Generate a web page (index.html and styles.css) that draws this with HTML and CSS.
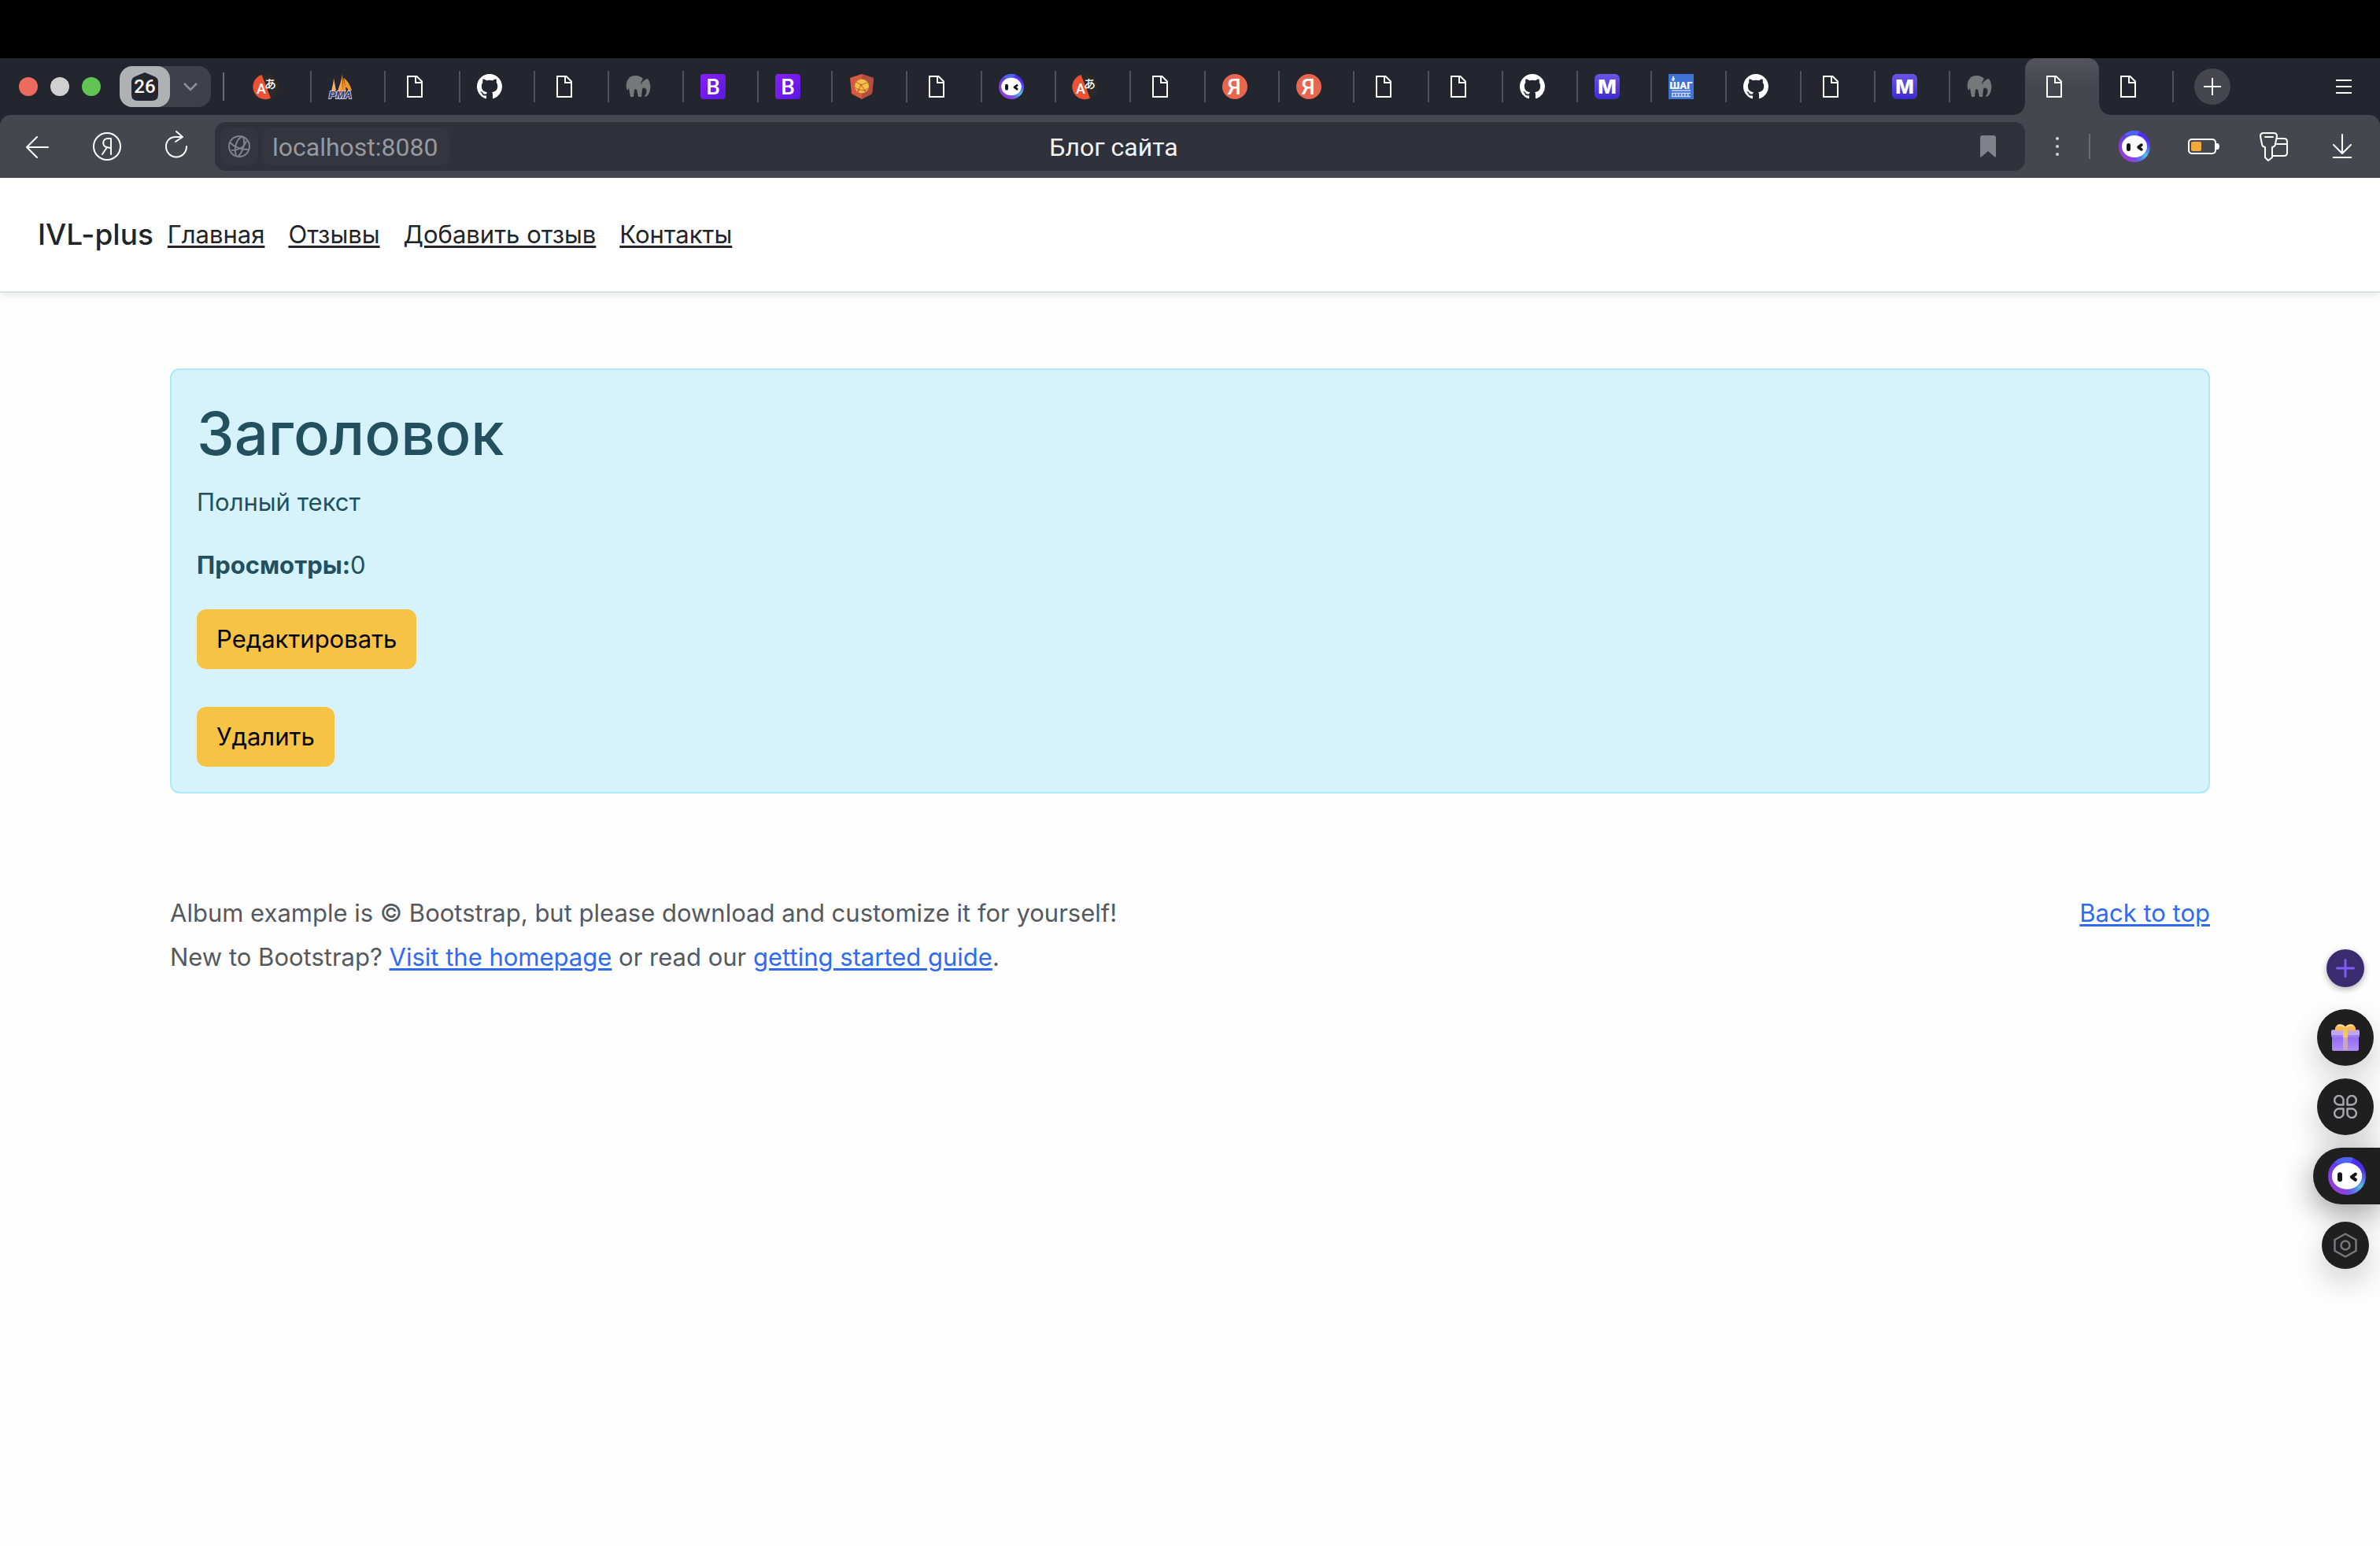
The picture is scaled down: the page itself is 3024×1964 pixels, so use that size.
FILE: index.html
```html
<!DOCTYPE html>
<html lang="ru">
<head>
<meta charset="utf-8">
<meta name="viewport" content="width=device-width, initial-scale=1">
<title>Блог сайта</title>
<link rel="stylesheet" href="styles.css">
</head>
<body>
<svg class="sprite" width="0" height="0" aria-hidden="true">
  <defs>
    <linearGradient id="g-alice" x1="0" y1="1" x2="1" y2="0">
      <stop offset="0" stop-color="#b23fd0"/><stop offset=".45" stop-color="#6a3df0"/><stop offset="1" stop-color="#4326f0"/>
    </linearGradient>
    <radialGradient id="g-cyan" cx=".88" cy=".8" r=".5">
      <stop offset="0" stop-color="#4fd0da"/><stop offset="1" stop-color="#4a6cf0" stop-opacity="0"/>
    </radialGradient>
    <linearGradient id="g-boot" x1="0" y1="0" x2="1" y2="1">
      <stop offset="0" stop-color="#8a1ff5"/><stop offset="1" stop-color="#5a17e0"/>
    </linearGradient>
    <linearGradient id="g-m" x1="0" y1="0" x2="0" y2="1">
      <stop offset="0" stop-color="#6a55e8"/><stop offset="1" stop-color="#3d2bd0"/>
    </linearGradient>
    <linearGradient id="g-sail" x1="0" y1="0" x2="1" y2="0">
      <stop offset="0" stop-color="#f4b976"/><stop offset="1" stop-color="#ef8d22"/>
    </linearGradient>
    <linearGradient id="g-gift" x1="0" y1="0" x2="0" y2="1">
      <stop offset="0" stop-color="#8a63f2"/><stop offset="1" stop-color="#b18cf8"/>
    </linearGradient>
  </defs>
  <symbol id="i-file" viewBox="0 0 32 32">
    <path d="M7 3h11.500l6.500 6.500V29H7zM17 3v8h8" fill="none" stroke="#fff" stroke-width="2"/>
  </symbol>
  <symbol id="i-github" viewBox="0 0 16 16">
    <path fill="#fff" d="M8 0C3.580 0 0 3.580 0 8c0 3.540 2.290 6.530 5.470 7.590.4.07.55-.17.55-.38 0-.19-.01-.82-.01-1.490-2.010.37-2.530-.49-2.690-.94-.09-.23-.48-.94-.82-1.130-.28-.15-.68-.52-.01-.53.63-.01 1.080.58 1.230.82.72 1.210 1.870.87 2.330.66.07-.52.28-.87.51-1.070-1.780-.2-3.640-.89-3.640-3.950 0-.87.31-1.590.82-2.150-.08-.2-.36-1.020.08-2.120 0 0 .67-.21 2.200.82.64-.18 1.320-.27 2-.27s1.360.09 2 .27c1.530-1.040 2.200-.82 2.200-.82.44 1.100.16 1.920.08 2.120.51.56.82 1.270.82 2.150 0 3.070-1.870 3.750-3.650 3.950.29.25.54.73.54 1.480 0 1.070-.01 1.930-.01 2.200 0 .21.15.46.55.38A8.010 8.010 0 0 0 16 8c0-4.420-3.580-8-8-8z"/>
  </symbol>
  <symbol id="i-elephant" viewBox="0 0 32 32">
    <path fill="#77787a" d="M1 12C2 6 6 2 12 2c5 0 8 2 10 4l-3 5 4 6-2 2-1 10h-4l-2-9c-1-1-2-1-3 0l-1 9H6L4 18l-2 3C1 18 0 15 1 12z"/>
    <path fill="#77787a" d="M20 11l5-4 3-1c3 4 4 9 3 14-1 5-3 8-6 9l-1-1c2-2 3-5 2-9-3-1-5-3-6-8z"/>
  </symbol>
  <symbol id="i-shield" viewBox="0 0 32 32">
    <path d="M16 0L31 5l-2 20-13 7-13-7L1 5z" fill="#d75a43"/>
    <path d="M16 0L31 5l-2 20-13 7z" fill="#b14f40"/>
    <circle cx="16" cy="15.500" r="9" fill="#f2c043"/>
    <path d="M9 10l6 4 8-3M15 14l-3 6 8 1-5-7M7 17l5 3-1 4M20 21l4-3" fill="none" stroke="#c4623b" stroke-width="1"/>
    <circle cx="15" cy="14" r="1.500" fill="#c4623b"/><circle cx="12" cy="20" r="1.500" fill="#c4623b"/><circle cx="20" cy="21" r="1.500" fill="#c4623b"/>
  </symbol>
  <symbol id="i-alice" viewBox="0 0 40 40">
    <circle cx="20" cy="20" r="20" fill="url(#g-alice)"/>
    <path d="M7 5a20 20 0 0 1 20-4l-4 6H10z" fill="#4f63f2"/>
    <circle cx="20" cy="20" r="20" fill="url(#g-cyan)"/>
    <ellipse cx="20" cy="20" rx="16" ry="14" fill="#fff"/>
    <rect x="10" y="16" width="5" height="10" rx="2.500" fill="#161616"/>
    <path d="M29 18l-4 3 4 3" fill="none" stroke="#161616" stroke-width="3.500" stroke-linecap="round" stroke-linejoin="round"/>
  </symbol>
</svg>

<div class="browser">
  <div class="strip">
    <div class="lights"><i class="light red"></i><i class="light gray"></i><i class="light green"></i></div>
    <div class="counter">
      <button class="count" aria-label="Вкладки">
        <svg width="34" height="36" viewBox="0 0 34 36" aria-hidden="true"><path d="M17 0l12 5q5 2 5 7v16q0 8-8 8H8q-8 0-8-8V12q0-5 5-7z" fill="#23262f"/></svg>
        <span class="count-num">26</span>
      </button>
      <button class="chev" aria-label="Список вкладок"><svg width="20" height="12" viewBox="0 0 20 12"><path d="M2 2l8 8 8-8" fill="none" stroke="#8e8f96" stroke-width="2.500"/></svg></button>
    </div>
    <nav class="tabs" aria-label="Вкладки">
      <a class="tab" href="#"><svg viewBox="0 0 32 32"><circle cx="16" cy="16" r="16" fill="#2b2a29"/><path d="M10.500 1A16 16 0 1 0 22 30.800z" fill="#ea5233"/><text class="ico-a" x="4" y="25">A</text><text class="ico-kana" x="14" y="18">あ</text></svg></a>
      <a class="tab" href="#"><svg viewBox="0 0 32 32"><path d="M7 5C7 11 5 16 4 22l6-1z" fill="#f2b06a"/><path d="M18 0c-1 8-4 15-6 22h7z" fill="url(#g-sail)"/><path d="M19 4c1 6 3 12 4 18h-4zM20 5c5 4 8 9 10 16h-5c0-3-1-4-3-4z" fill="#ef9430"/><text class="ico-pma" x="1" y="31">PMA</text></svg></a>
      <a class="tab" href="#"><svg><use href="#i-file"/></svg></a>
      <a class="tab" href="#"><svg><use href="#i-github"/></svg></a>
      <a class="tab" href="#"><svg><use href="#i-file"/></svg></a>
      <a class="tab" href="#"><svg><use href="#i-elephant"/></svg></a>
      <a class="tab" href="#"><svg viewBox="0 0 32 32"><rect width="32" height="32" rx="4" fill="url(#g-boot)"/><text class="ico-b" x="16" y="26">B</text></svg></a>
      <a class="tab" href="#"><svg viewBox="0 0 32 32"><rect width="32" height="32" rx="4" fill="url(#g-boot)"/><text class="ico-b" x="16" y="26">B</text></svg></a>
      <a class="tab" href="#"><svg><use href="#i-shield"/></svg></a>
      <a class="tab" href="#"><svg><use href="#i-file"/></svg></a>
      <a class="tab" href="#"><svg><use href="#i-alice"/></svg></a>
      <a class="tab" href="#"><svg viewBox="0 0 32 32"><circle cx="16" cy="16" r="16" fill="#2b2a29"/><path d="M10.500 1A16 16 0 1 0 22 30.800z" fill="#ea5233"/><text class="ico-a" x="4" y="25">A</text><text class="ico-kana" x="14" y="18">あ</text></svg></a>
      <a class="tab" href="#"><svg><use href="#i-file"/></svg></a>
      <a class="tab" href="#"><svg viewBox="0 0 32 32"><circle cx="16" cy="16" r="16" fill="#e8654f"/><text class="ico-b" x="15" y="26">Я</text></svg></a>
      <a class="tab" href="#"><svg viewBox="0 0 32 32"><circle cx="16" cy="16" r="16" fill="#e8654f"/><text class="ico-b" x="15" y="26">Я</text></svg></a>
      <a class="tab" href="#"><svg><use href="#i-file"/></svg></a>
      <a class="tab" href="#"><svg><use href="#i-file"/></svg></a>
      <a class="tab" href="#"><svg><use href="#i-github"/></svg></a>
      <a class="tab" href="#"><svg viewBox="0 0 32 32"><rect width="32" height="32" rx="6" fill="url(#g-m)"/><text class="ico-m" x="16" y="25">M</text></svg></a>
      <a class="tab" href="#"><svg viewBox="0 0 32 32"><rect width="32" height="32" fill="#3f74d6"/><text class="ico-shag" x="16" y="19">ШАГ</text><path d="M6 3v6M4 7l4-1" stroke="#dbe6fa" stroke-width="2"/><path d="M4 21h24M4 24.500h24M4 28.500h24" stroke="#c3d5f5" stroke-width="1.500"/><path d="M4 26.500h24" stroke="#c3d5f5" stroke-width="4" stroke-dasharray="1.500 2.500"/></svg></a>
      <a class="tab" href="#"><svg><use href="#i-github"/></svg></a>
      <a class="tab" href="#"><svg><use href="#i-file"/></svg></a>
      <a class="tab" href="#"><svg viewBox="0 0 32 32"><rect width="32" height="32" rx="6" fill="url(#g-m)"/><text class="ico-m" x="16" y="25">M</text></svg></a>
      <a class="tab bare" href="#"><svg><use href="#i-elephant"/></svg></a>
      <a class="tab active" href="#" aria-current="page"><svg><use href="#i-file"/></svg></a>
      <a class="tab" href="#"><svg><use href="#i-file"/></svg></a>
    </nav>
    <div class="strip-end">
      <button class="new-tab" aria-label="Новая вкладка"><svg width="22" height="22" viewBox="0 0 22 22"><path d="M11 0v22M0 11h22" stroke="#fff" stroke-width="2"/></svg></button>
      <button class="tool" aria-label="Меню"><svg width="20" height="18" viewBox="0 0 20 18"><path d="M0 1h20M0 9h20M0 17h20" stroke="#fff" stroke-width="2"/></svg></button>
    </div>
  </div>

  <div class="toolbar">
    <div class="tools">
      <button class="tool" aria-label="Назад"><svg width="40" height="40" viewBox="0 0 40 40"><path d="M33 21H6M19 8L6 21l13 13" class="line"/></svg></button>
      <button class="tool" aria-label="Яндекс"><svg width="40" height="40" viewBox="0 0 40 40"><circle cx="20" cy="20" r="17" class="line"/><path d="M25 30V10h-4c-7 0-8 10-1 11l4 1M20 21l-6 9" class="line"/></svg></button>
      <button class="tool" aria-label="Обновить"><svg width="40" height="40" viewBox="0 0 40 40"><path d="M28 8H19C12 8 7 13 7 20c0 8 6 13.500 13 13.500S33 28 33 20M20 1l8 7-9 6" class="line"/></svg></button>
    </div>
    <div class="address">
      <div class="address-side">
        <button class="globe" aria-label="Сведения о сайте"><svg width="30" height="30" viewBox="0 0 30 30"><g fill="none" stroke="#7f828a" stroke-width="2"><circle cx="15" cy="15" r="13"/><path d="M19 2C11 6 8 17 11 27M20 3c3 8 0 19-7 25M3 10c6 6 14 9 24 9M5 20c9 0 17-4 19-12"/></g></svg></button>
        <input class="url" type="text" value="localhost:8080" aria-label="Адрес">
      </div>
      <span class="page-title">Блог сайта</span>
      <div class="address-side end">
        <button class="globe plain" aria-label="Закладка"><svg width="20" height="28" viewBox="0 0 20 28"><path d="M3 0h14q3 0 3 3v24q0 1-2 0l-8-7-8 7q-2 1-2 0V3q0-3 3-3z" fill="#808289"/></svg></button>
      </div>
    </div>
    <button class="tool" aria-label="Ещё"><svg width="4" height="24" viewBox="0 0 4 24"><g fill="#d4d4d8"><circle cx="2" cy="2" r="2"/><circle cx="2" cy="12" r="2"/><circle cx="2" cy="22" r="2"/></g></svg></button>
    <i class="divider"></i>
    <div class="tools">
      <button class="tool" aria-label="Алиса"><svg width="40" height="40"><use href="#i-alice"/></svg></button>
      <button class="tool" aria-label="Батарея"><svg width="40" height="20" viewBox="0 0 40 20"><rect x="1" y="1" width="34" height="18" rx="4" fill="none" stroke="#fff" stroke-width="2"/><rect x="4" y="4" width="13" height="12" rx="2" fill="#f1a93b"/><path d="M36 6h2q2 1 2 4t-2 4h-2z" fill="#fff"/></svg></button>
      <button class="tool" aria-label="Пароли и карты"><svg width="40" height="40" viewBox="0 0 40 40"><path d="M25 10h9q4 0 4 4v14q0 4-4 4H20M25 17h13" class="line"/><path d="M8 3h13q4 0 4 4l-2 10q0 3-4 4v13l-5 4-4-4V21q-4-1-4-4L4 7q0-4 4-4zM10 8h10" class="line"/></svg></button>
      <button class="tool" aria-label="Загрузки"><svg width="24" height="32" viewBox="0 0 24 32"><path d="M12 1v24M1 14l11 11 11-11M0 30h24" class="line"/></svg></button>
    </div>
  </div>
</div>

<header class="site-header">
  <span class="brand">IVL-plus</span>
  <nav class="menu">
    <a href="#">Главная</a>
    <a href="#">Отзывы</a>
    <a href="#">Добавить отзыв</a>
    <a href="#">Контакты</a>
  </nav>
</header>

<main class="container">
  <article class="alert">
    <h1>Заголовок</h1>
    <p>Полный текст</p>
    <p><b>Просмотры:</b><span>0</span></p>
    <div class="actions">
      <button class="btn">Редактировать</button>
      <button class="btn">Удалить</button>
    </div>
  </article>
</main>

<footer class="container footer">
  <div class="footer-text">
    <p>Album example is © Bootstrap, but please download and customize it for yourself!</p>
    <p>New to Bootstrap? <a href="#">Visit the homepage</a> or read our <a href="#">getting started guide</a>.</p>
  </div>
  <a href="#">Back to top</a>
</footer>

<aside class="dock" aria-label="Боковая панель">
  <button class="dock-btn add" aria-label="Добавить"><svg width="24" height="24" viewBox="0 0 24 24"><path d="M12 1.500v21M1.500 12h21" stroke="#7f5cf5" stroke-width="3" stroke-linecap="round"/></svg></button>
  <button class="dock-btn round" aria-label="Подарки"><svg width="36" height="36" viewBox="0 0 36 36"><path d="M1 13h34v20q0 2-2 2H3q-2 0-2-2z" fill="url(#g-gift)"/><rect y="8" width="36" height="10" rx="2" fill="#9a7cf0"/><rect y="9" width="36" height="6" rx="2" fill="#bda6f6"/><path d="M15 18h6v16h-6z" fill="#c9a5c0"/><path d="M15 6h6v12h-6z" fill="#f3c55f"/><path d="M18 4C14 0 8 0 6 4c-2 3-1 6 1 6 5 0 8-1 11-3 3 2 6 3 11 3 2 0 3-3 1-6-2-4-8-4-12 0z" fill="#f6b955"/><path d="M17 5c-3-3-7-3-9-1M19 5c3-3 7-3 9-1" stroke="#fde0a0" stroke-width="2" fill="none"/></svg></button>
  <button class="dock-btn round" aria-label="Сервисы"><svg width="30" height="30" viewBox="0 0 30 30"><path d="M12.500 12.500V7.500a5.700 5.700 0 1 0-5.700 5zM17.500 12.500V7.500a5.700 5.700 0 1 1 5.700 5zM12.500 17.500v5a5.700 5.700 0 1 1-5.700-5zM17.500 17.500v5a5.700 5.700 0 1 0 5.700-5z" fill="none" stroke="#a6a6ab" stroke-width="2.500" stroke-linejoin="round"/></svg></button>
  <button class="dock-btn alice" aria-label="Алиса"><svg width="48" height="48"><use href="#i-alice"/></svg></button>
  <button class="dock-btn settings" aria-label="Настройки"><svg width="30" height="32" viewBox="0 0 30 32"><g fill="none" stroke="#77777d" stroke-width="2.500" stroke-linejoin="round"><path d="M15 1.500l13.500 7.500v14L15 30.500 1.500 23V9z"/><circle cx="15" cy="16" r="5.500"/></g></svg></button>
</aside>
</body>
</html>
```
FILE: styles.css
```css
* { box-sizing: border-box; }

body {
  margin: 0;
  background: #fefefe;
  color: #212529;
  font-family: Inter, "Liberation Sans", sans-serif;
  font-size: 31px;
  line-height: 48px;
}

button {
  padding: 0;
  border: 0;
  background: none;
  color: inherit;
  font: inherit;
}

svg { display: block; flex: none; }
.sprite { position: absolute; }

/* Browser chrome */
.browser {
  padding-top: 74px;
  background: linear-gradient(#000 74px, #23262f 74px);
  font-family: Roboto, "Liberation Sans", sans-serif;
}

.strip {
  display: flex;
  align-items: center;
  height: 72px;
  padding-left: 24px;
}

.lights { display: flex; gap: 16px; margin-right: 24px; }
.light { width: 24px; height: 24px; border-radius: 50%; }
.red { background: #ed6a5e; }
.gray { background: #d0d0d0; }
.green { background: #61c554; }

.counter {
  display: flex;
  width: 116px;
  height: 52px;
  border-radius: 16px;
  background: #3f4049;
}
.count {
  display: grid;
  place-items: center;
  width: 64px;
  border-radius: 16px;
  background: #b0b1b5;
}
.count > * { grid-area: 1 / 1; }
.count-num { color: #fff; font-size: 24px; font-weight: 500; line-height: 32px; }
.chev { display: grid; flex: 1; place-items: center; }

.tabs {
  display: flex;
  flex: 1;
  min-width: 0;
  margin-left: 15px;
  padding-left: 18px;
  align-self: stretch;
  background: linear-gradient(#6b6c73, #6b6c73) 0 50% / 2px 36px no-repeat;
}
.tab {
  position: relative;
  display: flex;
  flex: 1 1 0;
  align-items: center;
  min-width: 0;
  padding-left: 21px;
  background: linear-gradient(#50515a, #50515a) 100% 50% / 2px 40px no-repeat;
}
.tab svg { width: 32px; height: 32px; overflow: visible; }
.tab.bare { background: none; }
.tab.active {
  border-radius: 14px 14px 0 0;
  background: linear-gradient(#53535b, #46464f 50%);
}
.tab.active::before,
.tab.active::after {
  content: "";
  position: absolute;
  bottom: 0;
  width: 14px;
  height: 14px;
}
.tab.active::before {
  right: 100%;
  background: radial-gradient(circle at 0 0, transparent 13px, #46464f 14px);
}
.tab.active::after {
  left: 100%;
  background: radial-gradient(circle at 100% 0, transparent 13px, #46464f 14px);
}

/* Lettering inside the favicons */
.tab text { fill: #fff; font-family: Roboto, sans-serif; font-weight: 500; }
.ico-a { font-size: 18px; }
.tab .ico-kana { font-family: "Noto Sans CJK JP", sans-serif; font-size: 15px; font-weight: 500; }
.tab .ico-pma {
  fill: #35366b;
  stroke: #c9c9df;
  stroke-width: 2px;
  paint-order: stroke;
  font-family: "Liberation Sans", sans-serif;
  font-size: 13px;
  font-style: italic;
  font-weight: 700;
}
.ico-b { font-size: 28px; text-anchor: middle; }
.tab .ico-m { font-family: Inter, sans-serif; font-size: 25px; font-weight: 800; text-anchor: middle; }
.tab .ico-shag { font-size: 13px; font-weight: 900; text-anchor: middle; }

.strip-end {
  display: flex;
  align-items: center;
  justify-content: space-between;
  width: 262px;
  padding: 0 26px;
}
.new-tab {
  display: grid;
  place-items: center;
  width: 46px;
  height: 46px;
  border-radius: 50%;
  background: #46464f;
}

.toolbar {
  display: flex;
  align-items: center;
  height: 80px;
  padding: 0 28px;
  border-radius: 14px 14px 0 0;
  background: #46464f;
}
.tools { display: flex; gap: 48px; }
.tool { display: grid; place-items: center; width: 40px; height: 40px; }
.line {
  fill: none;
  stroke: #fff;
  stroke-width: 2;
  stroke-linecap: round;
  stroke-linejoin: round;
}
.address {
  display: flex;
  flex: 1;
  align-items: center;
  height: 62px;
  margin: 0 21px 0 29px;
  padding: 0 23px 0 7px;
  border-radius: 14px;
  background: #2f323b;
  font-size: 32px;
}
.address-side { display: flex; flex: 1; gap: 4px; }
.address-side.end { justify-content: flex-end; }
.globe {
  display: grid;
  place-items: center;
  width: 48px;
  height: 48px;
  border-radius: 12px;
  background: #33363f;
}
.globe.plain { background: none; }
.url {
  width: 240px;
  height: 48px;
  padding: 2px 14px 0;
  border: 0;
  border-radius: 12px;
  background: #33363f;
  color: #97999e;
  font: inherit;
}
.page-title { padding-top: 2px; color: #f4f4f5; }
.divider { width: 2px; height: 32px; margin: 0 36px 0 20px; background: #6a6a71; }

/* Site */
.site-header {
  display: flex;
  align-items: center;
  gap: 18px;
  padding: 48px;
  border-bottom: 2px solid #dee2e6;
  background: #fff;
  box-shadow: 0 4px 8px rgba(0, 0, 0, .075);
}
.brand { font-size: 37px; font-weight: 500; }
.menu { display: flex; gap: 30px; }
.menu a { color: #212529; }

a { color: #2f6bf2; text-decoration-thickness: 3px; text-underline-offset: 3px; }
p { margin: 0 0 32px; }

.container { margin: 0 216px; }

.alert {
  margin-top: 96px;
  padding: 32px;
  border: 2px solid #ade8f5;
  border-radius: 12px;
  background: #d6f3fb;
  color: #22505f;
}
.alert h1 {
  margin: 0 0 16px;
  font-size: 76px;
  font-weight: 500;
  line-height: 96px;
}
.actions {
  display: flex;
  flex-direction: column;
  align-items: flex-start;
  gap: 48px;
}
.btn {
  padding: 14px 25px;
  border-radius: 12px;
  background: #f6c344;
  color: #000;
}

.footer {
  display: flex;
  justify-content: space-between;
  padding: 128px 0 96px;
  color: #54595e;
}
.footer p { margin: 0 0 8px; }

/* Side dock floating over the page */
.dock {
  position: fixed;
  top: 1206px;
  right: 0;
  display: flex;
  flex-direction: column;
  align-items: center;
  width: 88px;
}
.dock-btn {
  display: grid;
  place-items: center;
  border-radius: 50%;
  background: #1f1f1f;
  box-shadow: 0 16px 40px rgba(0, 0, 0, .2);
}
.add {
  width: 48px;
  height: 48px;
  margin-bottom: 28px;
  background: #3a2c6e;
  box-shadow: 0 3px 8px rgba(0, 0, 0, .3);
}
.round { width: 72px; height: 72px; margin-bottom: 16px; }
.alice {
  align-self: flex-end;
  width: 85px;
  height: 72px;
  margin-bottom: 22px;
  border-radius: 36px 0 0 36px;
  box-shadow: 0 12px 40px rgba(0, 0, 0, .4);
}
.settings { width: 60px; height: 60px; }
```
